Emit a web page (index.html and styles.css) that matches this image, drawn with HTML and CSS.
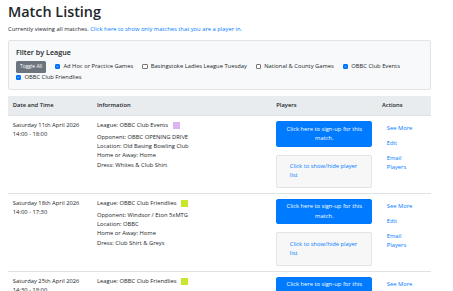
FILE: index.html
```html
<!DOCTYPE html>
<html lang="en">
<head>
    <meta charset="UTF-8">
    <title>Match Listing</title>
    <link rel="stylesheet" href="styles.css">
</head>
<body>

    <h1>Match Listing</h1>
    <p class="intro">Currently viewing all matches. <a href="#">Click here to show only matches that you are a player in.</a></p>

    <div class="filter">
        <h5>Filter by League</h5>
        <div class="filter-options">
            <button class="btn-toggle" type="button">Toggle All</button>
            <label class="check"><input type="checkbox" checked> Ad Hoc or Practice Games</label>
            <label class="check"><input type="checkbox"> Basingstoke Ladies League Tuesday</label>
            <label class="check"><input type="checkbox"> National &amp; County Games</label>
            <label class="check"><input type="checkbox" checked> OBBC Club Events</label>
            <label class="check"><input type="checkbox" checked> OBBC Club Friendlies</label>
        </div>
    </div>

    <table class="matches">
        <thead>
            <tr>
                <th class="col-date">Date and Time</th>
                <th class="col-info">Information</th>
                <th class="col-players">Players</th>
                <th>Actions</th>
            </tr>
        </thead>
        <tbody>
            <tr>
                <td>Saturday 11th April 2026<br>14:00 - 18:00</td>
                <td>
                    <div class="league">League: OBBC Club Events <span class="swatch swatch-events"></span></div>
                    <div>Opponent: OBBC OPENING DRIVE</div>
                    <div>Location: Old Basing Bowling Club</div>
                    <div>Home or Away: Home</div>
                    <div>Dress: Whites &amp; Club Shirt</div>
                </td>
                <td>
                    <a class="btn-signup" href="#">Click here to sign-up for this match.</a>
                    <div class="players-toggle"><a href="#">Click to show/hide player list</a></div>
                </td>
                <td>
                    <a class="action" href="#">See More</a>
                    <a class="action" href="#">Edit</a>
                    <a class="action" href="#">Email Players</a>
                </td>
            </tr>
            <tr>
                <td>Saturday 18th April 2026<br>14:00 - 17:30</td>
                <td>
                    <div class="league">League: OBBC Club Friendlies <span class="swatch swatch-friendlies"></span></div>
                    <div>Opponent: Windsor / Eton 5xMTG</div>
                    <div>Location: OBBC</div>
                    <div>Home or Away: Home</div>
                    <div>Dress: Club Shirt &amp; Greys</div>
                </td>
                <td>
                    <a class="btn-signup" href="#">Click here to sign-up for this match.</a>
                    <div class="players-toggle"><a href="#">Click to show/hide player list</a></div>
                </td>
                <td>
                    <a class="action" href="#">See More</a>
                    <a class="action" href="#">Edit</a>
                    <a class="action" href="#">Email Players</a>
                </td>
            </tr>
            <tr>
                <td>Saturday 25th April 2026<br>14:30 - 18:00</td>
                <td>
                    <div class="league">League: OBBC Club Friendlies <span class="swatch swatch-friendlies"></span></div>
                    <div>Opponent: Overtock 5xMTG</div>
                    <div>Location: Overtock</div>
                    <div>Home or Away: Away</div>
                    <div>Dress: Club Shirt &amp; Greys</div>
                </td>
                <td>
                    <a class="btn-signup" href="#">Click here to sign-up for this match.</a>
                    <div class="players-toggle"><a href="#">Click to show/hide player list</a></div>
                </td>
                <td>
                    <a class="action" href="#">See More</a>
                    <a class="action" href="#">Edit</a>
                    <a class="action" href="#">Email Players</a>
                </td>
            </tr>
        </tbody>
    </table>

</body>
</html>
```

FILE: styles.css
```css
body {
    font-family: 'Open Sans', 'Noto Sans', sans-serif;
    font-size: 5.8px;
    line-height: 9.3px;
    color: #212529;
    background-color: #ffffff;
    margin: 0;
    padding: 0 22px 0 8px;
}

a {
    color: #007bff;
    text-decoration: none;
}

h1 {
    font-size: 14.4px;
    font-weight: 600;
    line-height: 24px;
    margin: 0 0 1px;
}

.intro {
    margin: 0 0 5.4px;
}

.filter {
    background-color: #f8f9fa;
    border: 1px solid #e1e3e5;
    border-radius: 2px;
    padding: 7.2px 7px;
}

.filter h5 {
    font-size: 7.2px;
    font-weight: 600;
    line-height: 9.6px;
    margin: 0 0 3.2px;
}

.filter-options {
    display: flex;
    flex-wrap: wrap;
    align-items: center;
    column-gap: 9px;
}

.btn-toggle {
    font-family: inherit;
    font-size: 5px;
    line-height: 8.4px;
    height: 12px;
    width: 30px;
    padding: 1.8px 0;
    color: #ffffff;
    background-color: #6c757d;
    border: 0;
    border-radius: 1.5px;
}

.check {
    display: flex;
    align-items: center;
    gap: 3px;
    line-height: 9.6px;
}

.check input {
    appearance: none;
    width: 5.4px;
    height: 5.4px;
    margin: 0;
    background-color: #ffffff;
    border: 0.6px solid #767676;
    border-radius: 1px;
}

.check input:checked {
    background-color: #0075ff;
    border-color: #0075ff;
    background-image: url("data:image/svg+xml,%3Csvg xmlns='http://www.w3.org/2000/svg' viewBox='0 0 10 10'%3E%3Cpath d='M2.5 5.2l1.7 1.7 3.4-3.6' fill='none' stroke='%23fff' stroke-width='1.6'/%3E%3C/svg%3E");
    background-size: 100% 100%;
}

.matches {
    width: 100%;
    border-collapse: collapse;
    table-layout: fixed;
    margin-top: 6px;
}

th, td {
    padding: 4.8px;
    text-align: left;
    vertical-align: top;
}

thead th {
    background-color: #e9ecef;
    font-weight: 600;
    border-bottom: 1px solid #dee2e6;
}

tbody td {
    border-top: 1px solid #dee2e6;
}

.col-date {
    width: 74.6px;
}

.col-info {
    width: 169.7px;
}

.col-players {
    width: 96.1px;
}

.league {
    display: flex;
    align-items: center;
    gap: 5px;
    margin-bottom: 2.3px;
}

.swatch {
    display: inline-block;
    width: 7px;
    height: 7px;
}

.swatch-events {
    background-color: #dcb4f2;
}

.swatch-friendlies {
    background-color: #c8e62a;
}

.btn-signup {
    display: block;
    padding: 2.4px 4.8px;
    color: #ffffff;
    text-align: center;
    background-color: #007bff;
    border: 0.4px solid #007bff;
    border-radius: 2px;
}

.players-toggle {
    margin-top: 8px;
    padding: 6.7px 12.5px;
    background-color: #f7f7f7;
    border: 1px solid #e3e3e3;
    border-radius: 2px;
}

.action {
    display: block;
    padding: 2.8px 4.8px;
}
```
